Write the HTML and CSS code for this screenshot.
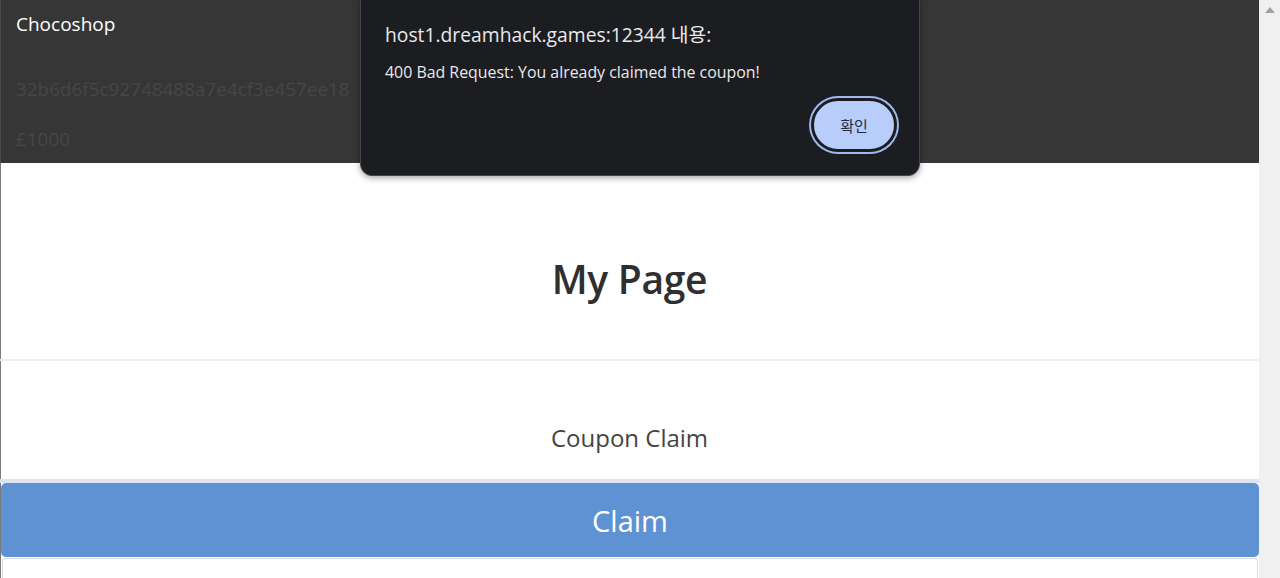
FILE: index.html
```html
<!DOCTYPE html>
<html lang="en">
<head>
<meta charset="utf-8">
<title>Chocoshop</title>
<link rel="stylesheet" href="styles.css">
</head>
<body>
<div class="window">
  <div class="main">
    <header class="topbar">
      <div class="brand">Chocoshop</div>
      <div class="meta">32b6d6f5c92748488a7e4cf3e457ee18</div>
      <div class="meta">£1000</div>
    </header>
    <section class="hero">
      <h1 class="title">My Page</h1>
    </section>
    <section class="coupon">
      <h2 class="subtitle">Coupon Claim</h2>
      <div class="claim-wrap">
        <button class="claim">Claim</button>
        <div class="card"></div>
      </div>
    </section>
  </div>
  <div class="scrollbar">
    <svg class="arrow" width="10" height="6" viewBox="0 0 10 6"><path d="M0 6 L5 0 L10 6 Z" fill="#a3a3a3"/></svg>
  </div>
</div>

<div class="dialog">
  <div class="dialog-title">host1.dreamhack.games:12344 내용:</div>
  <div class="dialog-msg">400 Bad Request: You already claimed the coupon!</div>
  <div class="dialog-actions">
    <button class="ok">확인</button>
  </div>
</div>
</body>
</html>
```

FILE: styles.css
```css
html, body {
  margin: 0;
  padding: 0;
  height: 100%;
  overflow: hidden;
  background: #ffffff;
  font-family: "Open Sans", "Noto Sans", "Noto Sans CJK KR", sans-serif;
}

.window {
  display: flex;
  height: 578px;
  overflow: hidden;
}

.main {
  width: 1259px;
  flex-shrink: 0;
  display: flex;
  flex-direction: column;
  box-shadow: inset 1px 0 0 #7a7a7a;
}

.main > * {
  flex-shrink: 0;
}

.topbar {
  background: #363636;
  height: 163px;
  box-sizing: border-box;
  padding: 10px 16px 0;
  box-shadow: inset 1px 0 0 #4a4a4a;
}

.brand {
  color: #ffffff;
  font-size: 19px;
  line-height: 28px;
}

.meta {
  color: #464646;
  font-size: 18.9px;
  line-height: 28px;
  margin-top: 37px;
}

.meta + .meta {
  margin-top: 22px;
}

.hero {
  height: 198px;
  box-sizing: border-box;
  display: flex;
  align-items: center;
  justify-content: center;
  border-bottom: 2px solid #f1f1f1;
}

.title {
  margin: 34px 0 0;
  font-size: 39px;
  font-weight: 600;
  color: #2f2f2f;
  letter-spacing: -0.3px;
}

.coupon {
  display: flex;
  flex-direction: column;
  align-items: center;
}

.subtitle {
  margin: 61px 0 0;
  font-size: 24px;
  font-weight: 400;
  color: #444444;
  line-height: 32px;
}

.claim-wrap {
  margin-top: 25px;
  width: 100%;
  box-sizing: border-box;
  padding-left: 1px;
  border-top: 4px solid #dde5f1;
}

.claim {
  display: block;
  width: 100%;
  height: 74px;
  border: none;
  border-radius: 5px;
  background: #5f92d3;
  color: #ffffff;
  font-family: inherit;
  font-size: 29px;
}

.card {
  margin: 1px 1px 0 1px;
  height: 30px;
  border: 1px solid #dcdcdc;
  border-bottom: none;
  border-radius: 4px 4px 0 0;
}

.scrollbar {
  width: 21px;
  flex-shrink: 0;
  background: #f0f0f0;
  display: flex;
  justify-content: center;
  align-items: flex-start;
  padding-top: 7px;
  box-sizing: border-box;
}

.arrow {
  display: block;
}

.dialog {
  position: absolute;
  left: 360px;
  top: -12px;
  width: 560px;
  height: 188px;
  box-sizing: border-box;
  background: #1c1d21;
  border: 1px solid #45464a;
  border-radius: 12px;
  box-shadow: 0 2px 6px rgba(0, 0, 0, 0.35);
  padding: 33px 22px 0 24px;
  color: #e8e9ed;
}

.dialog-title {
  font-size: 19.3px;
  line-height: 26px;
}

.dialog-msg {
  font-size: 15.9px;
  line-height: 20px;
  margin-top: 14px;
}

.dialog-actions {
  display: flex;
  justify-content: flex-end;
  margin-top: 16px;
}

.ok {
  width: 86px;
  height: 54px;
  border-radius: 27px;
  background: #b8cdf9;
  border: 3px solid #1c1d21;
  box-shadow: 0 0 0 2px #9fb9ef;
  color: #1d2b45;
  font-family: inherit;
  font-size: 15px;
}
```
